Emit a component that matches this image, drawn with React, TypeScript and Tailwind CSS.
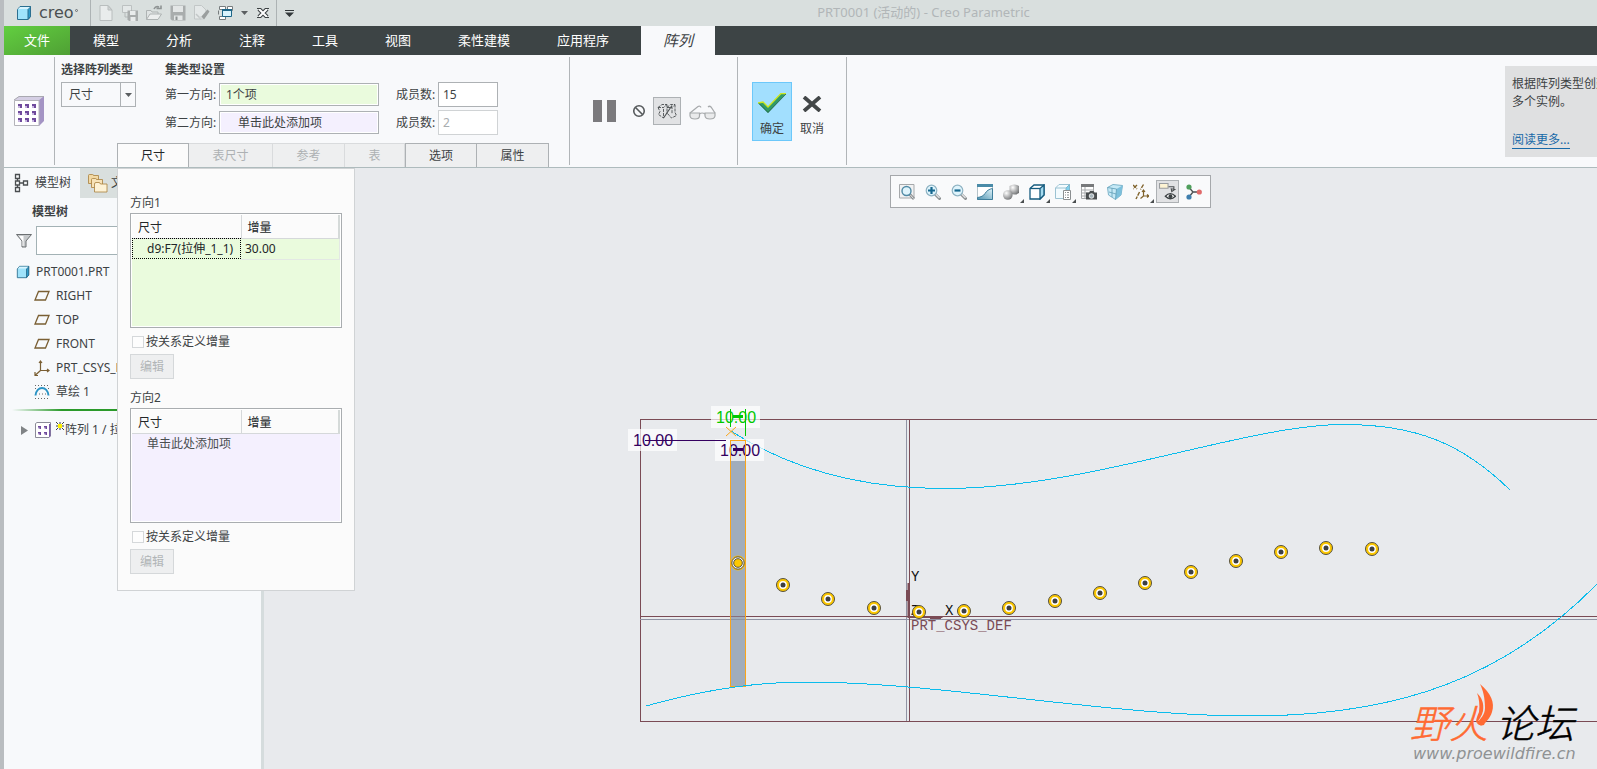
import type { ReactNode } from "react";
import clsx from "clsx";

const MENU_TABS = ["模型", "分析", "注释", "工具", "视图", "柔性建模", "应用程序"];

const PANEL_TABS = [
  { label: "尺寸", width: "w-[72px]", state: "active" },
  { label: "表尺寸", width: "w-[84px]", state: "disabled" },
  { label: "参考", width: "w-[72px]", state: "disabled" },
  { label: "表", width: "w-[60px]", state: "disabled" },
  { label: "选项", width: "w-[72px]", state: "normal" },
  { label: "属性", width: "w-[72px]", state: "normal" },
];

// Scene coordinates are in window space; the scene group is shifted to the canvas origin.
const SCENE_X = 264;
const SCENE_Y = 168;

const MEMBERS = [
  [783, 585],
  [828, 599],
  [874, 608],
  [919, 612],
  [964, 611],
  [1009, 608],
  [1055, 601],
  [1100, 593],
  [1145, 583],
  [1191, 572],
  [1236, 561],
  [1281, 552],
  [1326, 548],
  [1372, 549],
];

function Icon({ size = "size-4", children }: { size?: string; children: ReactNode }) {
  return (
    <svg className={clsx("shrink-0", size)} viewBox="0 0 16 16" fill="none" aria-hidden="true">
      {children}
    </svg>
  );
}

function CubeIcon({ size }: { size?: string }) {
  return (
    <Icon size={size}>
      <path d="M1.5 4.5 4 1.5h10.5v10l-2.5 3H1.5z" fill="#9fe3fb" stroke="#2b6f90" />
      <path d="M12 4.5v10l2.5-3v-10z" fill="#2f9ccb" stroke="#2b6f90" />
      <path d="M2 4 4.2 2H14l-2.2 2z" fill="#d8f5ff" />
    </Icon>
  );
}

function Caret({ className }: { className?: string }) {
  return (
    <svg className={clsx("h-1 w-[7px]", className)} viewBox="0 0 7 4" aria-hidden="true">
      <path d="M0 0h7L3.5 4z" fill="#5b5f61" />
    </svg>
  );
}

function QuickButton({ label, children }: { label: string; children: ReactNode }) {
  return (
    <button type="button" aria-label={label} className="flex h-6 w-6 items-center justify-center">
      {children}
    </button>
  );
}

function TitleBar() {
  return (
    <header className="flex h-[26px] items-center bg-[#d9dfde]">
      <div className="flex h-full w-[87px] shrink-0 items-center border-r border-[#adb3b4] pl-3">
        <CubeIcon />
        <span className="pl-[7px] font-['DejaVu_Sans',sans-serif] text-[16px] leading-5 text-[#4a4f51]">
          creo
        </span>
        <span className="mb-1.5 ml-px size-[3px] rounded-full border border-[#6b7072]" />
      </div>
      <div className="flex h-full shrink-0 items-center border-r border-[#adb3b4] pl-[3px]">
        <QuickButton label="新建">
          <Icon>
            <path d="M2 .5h8L14 5v10.500H2z" fill="#e9ecec" stroke="#b9bebe" />
            <path d="M10 .5V5h4z" fill="#d0d4d4" stroke="#b9bebe" />
          </Icon>
        </QuickButton>
        <QuickButton label="保存副本">
          <Icon>
            <path d="M.5.5h9v7h-9z" fill="#e4e8e8" stroke="#bcc1c1" />
            <path d="M3 7.500V12h3" stroke="#b4b9b9" />
            <path d="M5.500 5.500h10.500V16H7l-1.500-1.500z" fill="#a8acac" />
            <path d="M8 6h5.500v4H8zM8.500 12h5v4h-5z" fill="#e9ecec" />
          </Icon>
        </QuickButton>
        <QuickButton label="打开">
          <Icon>
            <path d="M.5 14.500V5.500H5l1 1.500h6v2" fill="#dfe3e3" stroke="#aeb3b3" />
            <path d="M.5 14.500 4 9h11.500L12 14.500z" fill="#eceeee" stroke="#aeb3b3" />
            <path d="M8 4c1-2 3-3 5-2M10.500 3.500H15V.5" stroke="#8f9494" strokeWidth="1.600" />
          </Icon>
        </QuickButton>
        <QuickButton label="保存">
          <Icon>
            <path d="M.5.5h15v15H2L.5 14z" fill="#a9adad" />
            <path d="M3 1h10v6H3z" fill="#e3e6e6" />
            <path d="M4 10.500h8.500V15H4z" fill="#e3e6e6" />
            <path d="M5.500 11.500h2V15h-2z" fill="#8f9494" />
          </Icon>
        </QuickButton>
        <QuickButton label="清理">
          <Icon>
            <path d="M.5.5h7L12 5v6l-4 3H.5z" fill="#e4e8e8" stroke="#c2c7c7" />
            <path d="m2 9 5 5" stroke="#c2c7c7" strokeWidth="1.500" />
            <path d="m6.500 12.500 7-8 2 2-5.500 8z" fill="#9a9e9e" />
            <path d="m5 12 3 3h2.500l-3.500-4z" fill="#d3d7d7" />
          </Icon>
        </QuickButton>
        <QuickButton label="窗口">
          <Icon>
            <path d="M1.500 1.500h6v3h-6zM1.500 11.500h6v3h-6zM9.500 1.500h5v4h-5z" fill="#fff" stroke="#777c7e" />
            <path d="M.5 5.500v4" stroke="#777c7e" />
            <path d="M4.500 4.500h9v7h-9z" fill="#d9f3fd" stroke="#1d6688" />
            <path d="M4 4h10v2H4z" fill="#1d6688" />
          </Icon>
        </QuickButton>
        <button type="button" aria-label="窗口列表" className="flex h-6 w-3 items-center justify-center">
          <Caret />
        </button>
        <button type="button" aria-label="关闭窗口" className="flex h-6 w-[26px] items-center justify-center">
          <svg className="h-[10px] w-3" viewBox="0 0 12 10" fill="none" aria-hidden="true">
            <path d="m2 1 8 8M10 1 2 9" stroke="#3d4244" strokeWidth="4.200" />
            <path d="m2 1 8 8M10 1 2 9" stroke="#fff" strokeWidth="2" />
            <path d="M0 .5h4M8 .5h4M0 9.500h4M8 9.500h4" stroke="#3d4244" />
          </svg>
        </button>
      </div>
      <button type="button" aria-label="自定义" className="flex h-6 w-6 shrink-0 items-center justify-center">
        <svg className="h-[7px] w-[9px]" viewBox="0 0 9 7" aria-hidden="true">
          <path d="M0 0h9v1H0zM0 2.500h9L4.500 7z" fill="#33383a" />
        </svg>
      </button>
      <h1 className="flex-1 pr-[51px] text-center text-[13px] text-[#b1b6b8]">
        PRT0001 (活动的) - Creo Parametric
      </h1>
    </header>
  );
}

function MenuBar() {
  return (
    <nav className="flex h-[29px] bg-[#3d4445] text-[13px] text-white">
      <button
        type="button"
        className="w-[66px] bg-linear-to-br from-[#62cf40] to-[#4fa034]"
      >
        文件
      </button>
      <div className="flex gap-[47px] pr-8 pl-[23px]">
        {MENU_TABS.map((tab) => (
          <button key={tab} type="button" className="whitespace-nowrap">
            {tab}
          </button>
        ))}
      </div>
      <button type="button" className="w-[74px] bg-[#f8f9fb] text-[15px] text-[#3d4244] italic">
        阵列
      </button>
    </nav>
  );
}

function Separator() {
  return <div className="my-0.5 w-px shrink-0 bg-[#b1b5b8]" />;
}

function DirectionRow({
  id,
  label,
  value,
  count,
  tint,
  disabled,
}: {
  id: string;
  label: string;
  value: string;
  count: number;
  tint: string;
  disabled?: boolean;
}) {
  return (
    <div className="flex h-7 items-center">
      <label htmlFor={`${id}-items`} className="w-[54px] pt-0.5">
        {label}
      </label>
      <input
        id={`${id}-items`}
        readOnly
        defaultValue={value}
        className={clsx(
          "h-[23px] w-40 border border-[#adb1b4] shadow-[inset_0_0_0_1px_white] outline-none",
          tint,
        )}
      />
      <label htmlFor={`${id}-count`} className="ml-[17px] w-[42px] pt-0.5">
        成员数:
      </label>
      <input
        id={`${id}-count`}
        defaultValue={count}
        disabled={disabled}
        className={clsx(
          "h-[25px] w-[60px] border bg-white px-1 outline-none",
          disabled ? "border-[#d0d3d5] text-[#a9adaf]" : "border-[#adb1b4]",
        )}
      />
    </div>
  );
}

function Ribbon() {
  return (
    <section className="flex h-[113px] border-b border-[#aebbbd] bg-[#f8f9fb] text-xs text-[#3d4244]">
      <div className="flex w-[50px] shrink-0 items-center justify-center">
        <svg className="size-[30px]" viewBox="0 0 30 30" aria-hidden="true">
          <path d="M0 4 5 0h25l-5 4z" fill="#d5cfe4" />
          <path d="M25 4 30 0v25l-5 5z" fill="#a494c4" />
          <path d="M.5 4.500h24.500v25H.5z" fill="#fff" stroke="#b3b3b9" />
          <path d="M0 4 5 .5h25" fill="none" stroke="#a9a9b0" />
          {[0, 1, 2].map((r) =>
            [0, 1, 2].map((c) => (
              <g key={`${r}${c}`}>
                <path d={`M${4 + c * 7} ${8 + r * 7}h4v4h-4z`} fill="#6f4a9c" />
                <path d={`M${4 + c * 7} ${10 + r * 7}h2v2h-2z`} fill="#c7b5e0" />
              </g>
            )),
          )}
        </svg>
      </div>
      <Separator />

      <div className="flex w-[514px] shrink-0 flex-col justify-between">
        <div className="flex pt-1.5 pl-1.5">
          <div className="w-[104px]">
            <label htmlFor="pattern-type" className="block h-[18px] leading-[18px] font-semibold">
              选择阵列类型
            </label>
            <div className="relative mt-[3px] h-[25px] w-[75px] border border-[#adb1b4] bg-[#f8f9fb]">
              <select
                id="pattern-type"
                className="block h-full w-full appearance-none bg-transparent pl-[7px] outline-none"
              >
                <option>尺寸</option>
              </select>
              <span className="pointer-events-none absolute inset-y-0 right-0 flex w-[15px] items-center justify-center border-l border-[#adb1b4]">
                <Caret />
              </span>
            </div>
          </div>
          <div>
            <h2 className="h-[18px] leading-[18px] font-semibold">集类型设置</h2>
            <div className="mt-px">
              <DirectionRow id="dir1" label="第一方向:" value="1个项" count={15} tint="bg-[#eafbdd] px-1.5" />
              <DirectionRow
                id="dir2"
                label="第二方向:"
                value="单击此处添加项"
                count={2}
                tint="bg-[#f4f0fe] px-[18px]"
                disabled
              />
            </div>
          </div>
        </div>
        <div role="tablist" className="flex h-6 pl-[62px]">
          {PANEL_TABS.map(({ label, width, state }) => (
            <button
              key={label}
              type="button"
              role="tab"
              aria-selected={state === "active"}
              disabled={state === "disabled"}
              className={clsx(
                "border-t border-r pt-px",
                width,
                state === "active" && "border-l border-[#adb1b4] bg-[#fbfbfb] text-[#222628]",
                state === "disabled" && "border-[#d9dbdd] bg-[#eeeff0] text-[#adb1b3]",
                state === "normal" && "border-[#adb1b4] bg-[#eeeff0] nth-5:border-l",
              )}
            >
              {label}
            </button>
          ))}
        </div>
      </div>
      <Separator />

      <div className="flex w-[167px] shrink-0 items-center pl-[23px]">
        <button type="button" aria-label="暂停" className="flex gap-[5px]">
          <span className="h-[22px] w-[9px] bg-[#7b7a7d]" />
          <span className="h-[22px] w-[9px] bg-[#7b7a7d]" />
        </button>
        <button type="button" aria-label="无预览" className="ml-4">
          <Icon size="size-[14px]">
            <circle cx="8" cy="8" r="6" stroke="#55595b" strokeWidth="1.800" />
            <path d="m4 4 8 8" stroke="#55595b" strokeWidth="1.800" />
          </Icon>
        </button>
        <button
          type="button"
          aria-label="连接预览"
          className="ml-[7px] flex size-7 items-center justify-center border border-[#adb1b4] bg-[#e1e2e4]"
        >
          <svg className="h-4 w-5" viewBox="0 0 20 16" fill="none" stroke="#4a4e50" strokeWidth=".9" aria-hidden="true">
            <path d="M1 4.500 5 1.500h5M1 4.500h5.500L10 1.500M1 4.500l2 4-1.500 3 5 3.500V4.500" strokeDasharray="3 1" />
            <path d="M10 1.500v9M10 4.500 13.500 1.500H18l-3 3v6M10 4.500h5M18 1.500v8l1.500 3-5 2.500-4.500-5" strokeDasharray="3 1" />
            <path d="M6.500 15 15 2.500" strokeWidth="1.100" />
          </svg>
        </button>
        <button type="button" aria-label="校验预览" className="ml-2 pt-0.5">
          <svg className="h-[15px] w-[27px]" viewBox="0 0 27 15" fill="none" stroke="#a6a9ab" strokeWidth="1.200" aria-hidden="true">
            <path d="M1 8h9.500v3q0 3-4.500 3t-5-3zM16 8h10v3q-.500 3-5 3t-5-3z" fill="#e9eaeb" />
            <path d="M10.500 9q2.500-2 5.500 0M1 8l8-6.500q2-1 3 1M26 8l-4-6q-1.500-1.500-3 0" />
          </svg>
        </button>
      </div>
      <Separator />

      <div className="flex w-[108px] shrink-0 items-start gap-1 pt-[27px] pl-3.5">
        <button
          type="button"
          className="flex h-[59px] w-10 flex-col items-center border border-[#6cc8fa] bg-[#a2dffe] pt-2.5"
        >
          <svg className="h-5 w-7" viewBox="0 0 28 20" aria-hidden="true">
            <path d="m0 10 5-1 5 5L23 .5h5L10 20z" fill="#2f9a68" />
            <path d="m0 10 5-1 5 5L23 .5h5" fill="none" stroke="#cde51d" strokeWidth="1.300" />
            <path d="M28 1 10 19.500l-9-9" fill="none" stroke="#1f5c40" strokeWidth=".8" />
          </svg>
          <span className="mt-[7px] leading-[18px]">确定</span>
        </button>
        <button type="button" className="flex h-[59px] w-8 flex-col items-center pt-3.5">
          <svg className="h-4 w-5" viewBox="0 0 20 16" fill="none" aria-hidden="true">
            <path d="m2 1 16 14M18 1 2 15" stroke="#434748" strokeWidth="3.800" />
          </svg>
          <span className="mt-2 leading-[18px]">取消</span>
        </button>
      </div>
      <Separator />

      <aside className="mt-[11px] ml-auto h-[91px] w-[92px] shrink-0 overflow-hidden bg-[#dfe0e1] pt-[9px] pl-[7px] leading-[18px] whitespace-nowrap">
        <p>根据阵列类型创建</p>
        <p>多个实例。</p>
        <a href="#" className="mt-5 inline-block border-b border-[#1769a8] leading-[17px] text-[#1769a8]">
          阅读更多...
        </a>
      </aside>
    </section>
  );
}

function TreeRow({ icon, label, root }: { icon: ReactNode; label: string; root?: boolean }) {
  return (
    <li className={clsx("flex h-6 items-center gap-1.5 whitespace-nowrap", root ? "pl-3" : "pl-[30px]")}>
      {icon}
      <span>{label}</span>
    </li>
  );
}

const planeIcon = (
  <Icon>
    <path d="M4.500 3.500h10.500l-3.500 8.500H1z" stroke="#7a5f33" strokeWidth="1.300" />
  </Icon>
);

function ModelTree() {
  return (
    <aside className="w-[260px] shrink-0 border-r-[3px] border-[#d5dcdd] bg-[#f7f9fb] text-xs text-[#3d4244]">
      <div className="flex h-[30px] bg-[#d9dfde]">
        <button type="button" className="flex w-[76px] items-center gap-1.5 bg-[#f7f9fb] pl-2.5">
          <svg className="h-5 w-[15px]" viewBox="0 0 15 20" fill="none" stroke="#4a4e50" strokeWidth="1.300" aria-hidden="true">
            <path d="M1.500 1.500h4v4h-4zM1.500 8h4v4h-4zM1.500 14.500h4v4h-4zM9.500 8h4v4h-4zM3.500 5.500V8M3.500 12v2.500M5.500 10h4" />
          </svg>
          模型树
        </button>
        <button type="button" className="flex items-center gap-[3px] pl-2 whitespace-nowrap">
          <svg className="size-5" viewBox="0 0 20 20" stroke="#a8803d" strokeWidth=".8" aria-hidden="true">
            <path d="M.500 2.500q0-1 1-1h3q1 0 1 1h5v8H.5z" fill="#f3d9a4" />
            <path d="M3.500 6.500q0-1 1-1h3q1 0 1 1h6v8h-11z" fill="#f7e3b9" />
            <path d="M6.500 11q0-1.500 1.500-1.500h3q1 0 1.500 1.500H19v8H6.500z" fill="#fdf2d6" />
          </svg>
          文件夹浏览器
        </button>
      </div>
      <h2 className="pt-1 pl-7 leading-5 font-semibold">模型树</h2>
      <div className="mt-1 flex items-center gap-1 pl-3">
        <Icon>
          <path d="M.5 1.500h15L10 8v6H6V8z" fill="#c6c9cb" stroke="#6c7072" />
          <path d="M6.500 8 3 3h4.500v10h-1z" fill="#fff" />
        </Icon>
        <input aria-label="筛选" className="h-[29px] w-[216px] border border-[#a3b2b5] bg-white px-1 outline-none" />
      </div>
      <ul className="pt-[5px]">
        <TreeRow root label="PRT0001.PRT" icon={<CubeIcon size="size-3.5" />} />
        <TreeRow label="RIGHT" icon={planeIcon} />
        <TreeRow label="TOP" icon={planeIcon} />
        <TreeRow label="FRONT" icon={planeIcon} />
        <TreeRow
          label="PRT_CSYS_DEF"
          icon={
            <Icon>
              <path d="M6.500 1v9.500H15M6.500 10.500l-5 4.500M5 3l1.500-2L8 3M13 9l2 1.500-2 1.500M1 12v3.500h3" stroke="#7a5f33" strokeWidth="1.200" />
            </Icon>
          }
        />
        <TreeRow
          label="草绘 1"
          icon={
            <Icon>
              <path d="M1.500 11.500C2.500 1.500 13.500 1.500 14.500 11.500" stroke="#2a93c4" strokeWidth="2" />
              <path d="M1 1.500h14M1 14.500h14M5 10h7M1 4.500h1M14 4.500h1" stroke="#666" strokeDasharray="1 2" />
            </Icon>
          }
        />
      </ul>
      <div className="mt-[5px] ml-2 h-0.5 bg-linear-to-r from-transparent via-[#2a9a2a] via-20% to-[#2a9a2a]" />
      <ul className="pt-[7px]">
        <li className="flex h-6 items-center pl-[17px] whitespace-nowrap">
          <svg className="h-[9px] w-[7px]" viewBox="0 0 7 9" aria-hidden="true">
            <path d="M0 0v9l7-4.500z" fill="#808486" />
          </svg>
          <svg className="ml-[7px] size-4" viewBox="0 0 16 16" aria-hidden="true">
            <path d="M.5 1.500 2 .5h13.500V14L14 15.500H.5z" fill="#fff" stroke="#8b8b98" />
            <path d="M14 2h1.500v12L14 15.500z" fill="#7b5ca8" />
            <path d="M3 4h3v3H3zM9 4h3v3H9zM3 10h3v3H3zM9 10h3v3H9z" fill="#6f4a9c" />
            <path d="M3 5.500h1.500V7H3zM9 5.500h1.500V7H9zM3 11.500h1.500V13H3zM9 11.500h1.500V13H9z" fill="#d8cdea" />
          </svg>
          <svg className="mb-2 ml-[5px] size-2" viewBox="0 0 8 8" aria-hidden="true">
            <path d="m0 0 8 8M8 0 0 8M4 0v8M0 4h8" stroke="#3d4244" />
            <path d="M2 2h4v4H2z" fill="#fff200" />
          </svg>
          <span className="ml-px">阵列 1 / 拉伸 1</span>
        </li>
      </ul>
    </aside>
  );
}

function DirectionGroup({
  id,
  title,
  tint,
  row,
}: {
  id: string;
  title: string;
  tint: string;
  row?: { name: string; increment: string };
}) {
  return (
    <section>
      <h3 className="leading-5">{title}</h3>
      <div className={clsx("h-[115px] w-[212px] border border-[#a9adb0] p-px shadow-[inset_0_0_0_1px_white]", tint)}>
        <table className="w-full table-fixed border-collapse text-left text-[#222628]">
          <thead>
            <tr className="h-[23px] border-b border-[#d5d8da] bg-[#fbfbfb]">
              <th className="w-[109px] border-r border-[#d5d8da] pt-1 pl-1.5 font-normal">尺寸</th>
              <th className="border-r-2 border-[#d5dad9] pt-1 pl-1.5 font-normal">增量</th>
            </tr>
          </thead>
          <tbody>
            {row ? (
              <tr className="h-[21px]">
                <td className="pl-[15px] whitespace-nowrap outline-1 -outline-offset-1 outline-black outline-dotted">
                  {row.name}
                </td>
                <td className="border-r border-b border-[#e3e8e4] pl-1">{row.increment}</td>
              </tr>
            ) : (
              <tr className="h-[21px]">
                <td colSpan={2} className="pl-[15px] text-[#4a4e50]">
                  单击此处添加项
                </td>
              </tr>
            )}
          </tbody>
        </table>
      </div>
      <div className="mt-1 flex h-5 items-center gap-0.5 pl-0.5">
        <input
          id={id}
          type="checkbox"
          className="size-3 appearance-none border border-[#d5d8da] bg-[#fdfdfd]"
        />
        <label htmlFor={id}>按关系定义增量</label>
      </div>
      <button
        type="button"
        disabled
        className="mt-0.5 block h-[25px] w-11 border border-[#d5d8da] bg-[#eeeff0] text-[#b1b5b7]"
      >
        编辑
      </button>
    </section>
  );
}

function DimensionPanel() {
  return (
    <div className="absolute top-0 left-[113px] flex w-[238px] flex-col gap-[9px] border border-[#d0d3d5] bg-[#fbfbfb] pt-6 pb-4 pl-3 text-xs text-[#3d4244]">
      <DirectionGroup
        id="rel1"
        title="方向1"
        tint="bg-[#eafbdd]"
        row={{ name: "d9:F7(拉伸_1_1)", increment: "30.00" }}
      />
      <DirectionGroup id="rel2" title="方向2" tint="bg-[#f4f0fe]" />
    </div>
  );
}

function ViewButton({
  label,
  corner,
  pressed,
  children,
}: {
  label: string;
  corner?: boolean;
  pressed?: boolean;
  children: ReactNode;
}) {
  return (
    <button
      type="button"
      aria-label={label}
      aria-pressed={pressed}
      className={clsx(
        "relative flex h-[23px] items-center justify-center",
        pressed && "mx-0.5 w-[23px] border border-[#adb1b4] bg-[#e1e2e4]",
        !pressed && "w-[26px]",
      )}
    >
      {children}
      {corner && (
        <svg className="absolute right-0 bottom-0 size-1" viewBox="0 0 4 4" aria-hidden="true">
          <path d="M4 0v4H0z" fill="#4a4e50" />
        </svg>
      )}
    </button>
  );
}

function Lens({ sign }: { sign: string }) {
  return (
    <>
      <path d="m10 10 4.500 4.500" stroke="#8b8f91" strokeWidth="3" strokeLinecap="round" />
      <path d="m10.500 10 4 4" stroke="#e3e5e6" strokeWidth="1.300" />
      <circle cx="6.500" cy="6.500" r="5.300" fill="#dff4fc" stroke="#8fb3c3" strokeWidth="1.200" />
      <path d={sign} stroke="#17688f" strokeWidth="2.200" />
    </>
  );
}

function ViewToolbar() {
  return (
    <div
      role="toolbar"
      aria-label="视图"
      className="relative mt-[7px] ml-[626px] flex h-[33px] w-fit items-center border border-[#a5a8ab] bg-[#f9fafb] px-[3px]"
    >
      <ViewButton label="重新调整">
        <Icon>
          <path d="M.5.5h14.500v13.500H.5z" fill="#f1f2f3" stroke="#a6a9ab" />
          <path d="m10.500 10 4.500 5" stroke="#8b8f91" strokeWidth="2.800" />
          <path d="m11 10.500 3.500 4" stroke="#e3e5e6" />
          <circle cx="7.500" cy="7" r="4.500" fill="#dff4fc" stroke="#4f8aa5" strokeWidth="1.400" />
        </Icon>
      </ViewButton>
      <ViewButton label="放大">
        <Icon>
          <Lens sign="M3 6.500h7M6.500 3v7" />
        </Icon>
      </ViewButton>
      <ViewButton label="缩小">
        <Icon>
          <Lens sign="M3.500 6.500h6" />
        </Icon>
      </ViewButton>
      <ViewButton label="重画">
        <Icon>
          <defs>
            <linearGradient id="repaint" x1="1" y1="0" x2="0" y2="1">
              <stop offset="0" stopColor="#e2f5fb" />
              <stop offset="1" stopColor="#4f93b0" />
            </linearGradient>
          </defs>
          <path d="M.5.5h15v15H.5z" fill="#fff" stroke="#b5c3c9" />
          <path d="M15.500 4.500C12 5 9.500 7 8 9.500 6.500 12 4 13 .5 13.500v2h15z" fill="url(#repaint)" stroke="#3f7f9c" />
          <path d="M0 0h16v3H0z" fill="#4a8ba8" />
        </Icon>
      </ViewButton>
      <ViewButton label="渲染" corner>
        <Icon>
          <defs>
            <radialGradient id="ball" cx=".35" cy=".3" r=".8">
              <stop offset="0" stopColor="#fff" />
              <stop offset="1" stopColor="#6b6d6f" />
            </radialGradient>
          </defs>
          <path d="M6.500 2q4.500-3 9.500 0v7q-4 3-9.500 0z" fill="url(#ball)" />
          <circle cx="4.800" cy="11" r="4.800" fill="url(#ball)" />
        </Icon>
      </ViewButton>
      <ViewButton label="显示样式" corner>
        <Icon>
          <path d="M1 4.500 5 1h10v10l-4 4H1z" fill="#fff" stroke="#155b7e" strokeWidth="1.300" />
          <path d="M11 4.500V15l4-4V1z" fill="#a6dcf1" stroke="#155b7e" strokeWidth="1.300" />
          <path d="M1 4.500h10" stroke="#155b7e" strokeWidth="1.300" />
        </Icon>
      </ViewButton>
      <ViewButton label="已保存方向" corner>
        <Icon>
          <path d="M.5 4 4 .5h10.500v3L11 14.500H.5z" fill="#f3fbfe" stroke="#9cc3d3" />
          <path d="M11 4 14.500.5v7H11z" fill="#7fcfec" stroke="#7fb7cc" />
          <path d="M.5 4H11" stroke="#9cc3d3" />
          <path d="M8.500 6.500h7v9h-7z" fill="#fff" stroke="#8b8f91" />
          <path d="M10 8.500h1M10 11h1M10 13.500h1M12 8.500h2M12 11h2M12 13.500h2" stroke="#8b8f91" />
        </Icon>
      </ViewButton>
      <ViewButton label="视图管理器">
        <Icon>
          <path d="M.5.5h12v14H.5z" fill="#fff" stroke="#a6a9ab" />
          <path d="M0 0h13v3H0z" fill="#77797b" />
          <path d="M.5 6h12M.5 9h12M.5 12h12M4 3v12" stroke="#a6a9ab" />
          <path d="M5 8.500h3L9 7h3.500l1 1.500H16V15.500H5z" fill="#4a4e50" />
          <circle cx="10.500" cy="12" r="2.300" fill="#a6b4bb" stroke="#fff" strokeWidth=".8" />
        </Icon>
      </ViewButton>
      <ViewButton label="透视图">
        <Icon>
          <path d="M.5 3.500 6 .5l9.500 1L14 11l-5.500 4.500L1.500 11z" fill="#c5e9f6" stroke="#7db3c9" />
          <path d="M9.500 5 15.500 1.500 14 11l-5.500 4.500z" fill="#7cc0dc" />
          <path d="M.5 3.500 9.500 5l-1 10.500M2 8l7 2M5 4v9" stroke="#5f9db6" strokeWidth=".8" />
        </Icon>
      </ViewButton>
      <ViewButton label="基准显示过滤器" corner>
        <Icon>
          <path d="m0 1 4 4M4 1 0 5M10.500.5 7.500 5.500M6.500 8l-3.500 7" stroke="#80632c" strokeWidth="1.400" strokeDasharray="4 1" />
          <path d="M10.500 6v6H16M10.500 12l-3 2.500M9 8l1.500-2L12 8M14 10.500l2 1.500-2 1.500" stroke="#80632c" strokeWidth="1.200" />
        </Icon>
      </ViewButton>
      <ViewButton label="注释显示" pressed>
        <Icon size="size-[17px]">
          <path d="M.5.5h8v4.500h-8z" fill="#fdf3d3" stroke="#9a9da0" />
          <path d="M9 3.500h5v3M11.500 5.500 12 8l3-2z" stroke="#4a4e50" />
          <path d="M6 12.500q4.500-5 9.500 0-5 4.500-9.500 0z" fill="#fff" stroke="#3d4244" strokeWidth="1.300" />
          <circle cx="10.800" cy="12.500" r="1.800" fill="#3d4244" />
        </Icon>
      </ViewButton>
      <ViewButton label="旋转中心">
        <Icon>
          <path d="M7 8 3 3.500M7 8h6M7 8l-4 5" stroke="#4a4e50" strokeWidth="1.300" />
          <circle cx="3" cy="3" r="2.600" fill="#4f9f5c" />
          <circle cx="13.300" cy="8" r="2.600" fill="#e06a6a" />
          <circle cx="3" cy="13" r="2.600" fill="#3f7fae" />
        </Icon>
      </ViewButton>
    </div>
  );
}

function DimensionLabel({ x, y, color }: { x: number; y: number; color: string }) {
  return (
    <g>
      <rect x={x} y={y} width="49" height="22" fill="#fff" fillOpacity=".7" />
      <text x={x + 5} y={y + 17} fontSize="16" fill={color} fontFamily="'Liberation Sans', sans-serif">
        10.00
      </text>
    </g>
  );
}

function Scene() {
  return (
    <svg className="absolute inset-0 h-full w-full" fill="none" role="img" aria-label="PRT0001">
      <g transform={`translate(${-SCENE_X} ${-SCENE_Y})`}>
        {/* datum planes */}
        <g shapeRendering="crispEdges">
          <path d="M1700 419.500H640.500V721.500H1700" stroke="#7a4b55" />
          <path d="M640 619.500H1700M906.500 420V721" stroke="#9093a3" />
          <path d="M640 616.500H1700M909.500 420V721" stroke="#7a4b55" />
          <rect x="730.500" y="440.500" width="15" height="246" fill="#a0adbc" stroke="#f9a51b" />
          <path d="M731 616.500h14" stroke="#86707f" />
          <path d="M731 619.500h14" stroke="#8c95a5" />
        </g>

        {/* sketch curves */}
        <g stroke="#0bbcec" shapeRendering="crispEdges">
          <path d="M731 431C790 469 860 488.500 945 488.500 1090 488.500 1245 424.500 1344 424.500 1415 424.500 1462 443 1510 490" />
          <path d="M646 706C710 688 760 682 805 682 940 682 1110 716 1250 716 1400 716 1507 677 1600 581" />
        </g>

        {/* default csys */}
        <path d="M908.500 583v34h34M907 590v11M930 618h11" stroke="#7a4b55" strokeWidth="2" />
        <g fontFamily="'Liberation Mono', monospace" fontSize="14">
          <text x="911" y="581" fill="#111">Y</text>
          <text x="945" y="615" fill="#111">X</text>
          <text x="911" y="615" fill="#111">Z</text>
          <text x="911" y="630" fill="#7a4b55">PRT_CSYS_DEF</text>
        </g>

        {/* driving dimensions */}
        <DimensionLabel x={711} y={406} color="#00c800" />
        <DimensionLabel x={628} y={429} color="#340060" />
        <DimensionLabel x={715} y={439} color="#340060" />
        <g shapeRendering="crispEdges">
          <path d="M730.500 409v18M745.500 409v27" stroke="#00c800" />
          <path d="M733 416.500h10" stroke="#00c800" strokeWidth="3" />
          <path d="M645 440.500h81" stroke="#340060" />
          <path d="M733 449.500h10" stroke="#340060" strokeWidth="3" />
          <path d="M730.500 461V440.500h15V461" stroke="#f9a51b" />
        </g>
        <path d="m726 427 10 9M736 427l-10 9" stroke="#f9a51b" />

        {/* pattern members */}
        <circle cx="738" cy="563" r="7.500" fill="#f6c11a" />
        <circle cx="738" cy="563" r="6.200" fill="#f3f3ee" stroke="#55503f" />
        <circle cx="738" cy="563" r="4.300" fill="#fdc800" stroke="#55503f" strokeWidth="1" />
        {MEMBERS.map(([x, y]) => (
          <g key={x}>
            <circle cx={x} cy={y} r="5.200" fill="#fff" stroke="#fdc800" strokeWidth="2.600" />
            <circle cx={x} cy={y} r="6.500" stroke="#55503f" />
            <circle cx={x} cy={y} r="2.500" fill="#3d3f42" />
          </g>
        ))}
      </g>
    </svg>
  );
}

function Watermark() {
  return (
    <svg className="absolute right-2 bottom-1 h-[84px] w-[180px]" viewBox="0 0 180 84" aria-label="野火论坛">
      <g fontFamily="'Noto Sans CJK SC', sans-serif" fontSize="39" fontWeight="300" fontStyle="italic" strokeWidth=".5">
        <text x="1" y="57" fill="#ff6a33" stroke="#ff6a33">野火</text>
        <text x="87" y="57" fill="#000" stroke="#000">论坛</text>
      </g>
      <path
        d="M71 3C82 12 86 22 83 31 81 38 76 41 75 44 72 45 69 44 68 42 71 38 76 34 76 27 76 17 74 9 71 3zM68 12C73 17 75 22 74 30 73 35 70 38 68 42 66 40 68 36 70 31 71 24 70 17 68 12z"
        fill="#ff6a33"
      />
      <text
        x="4"
        y="78"
        fill="#8f9294"
        fontFamily="'DejaVu Sans', sans-serif"
        fontSize="16"
        fontStyle="italic"
      >
        www.proewildfire.cn
      </text>
    </svg>
  );
}

export default function App() {
  return (
    <div className="flex min-h-screen flex-col overflow-hidden border-l-4 border-[#b9bdc0] bg-[#e8eaed] font-['Noto_Sans','Noto_Sans_CJK_SC',sans-serif]">
      <TitleBar />
      <MenuBar />
      <Ribbon />
      <div className="relative flex flex-1">
        <ModelTree />
        <main className="relative min-w-0 flex-1">
          <Scene />
          <ViewToolbar />
          <Watermark />
        </main>
        <DimensionPanel />
      </div>
    </div>
  );
}
